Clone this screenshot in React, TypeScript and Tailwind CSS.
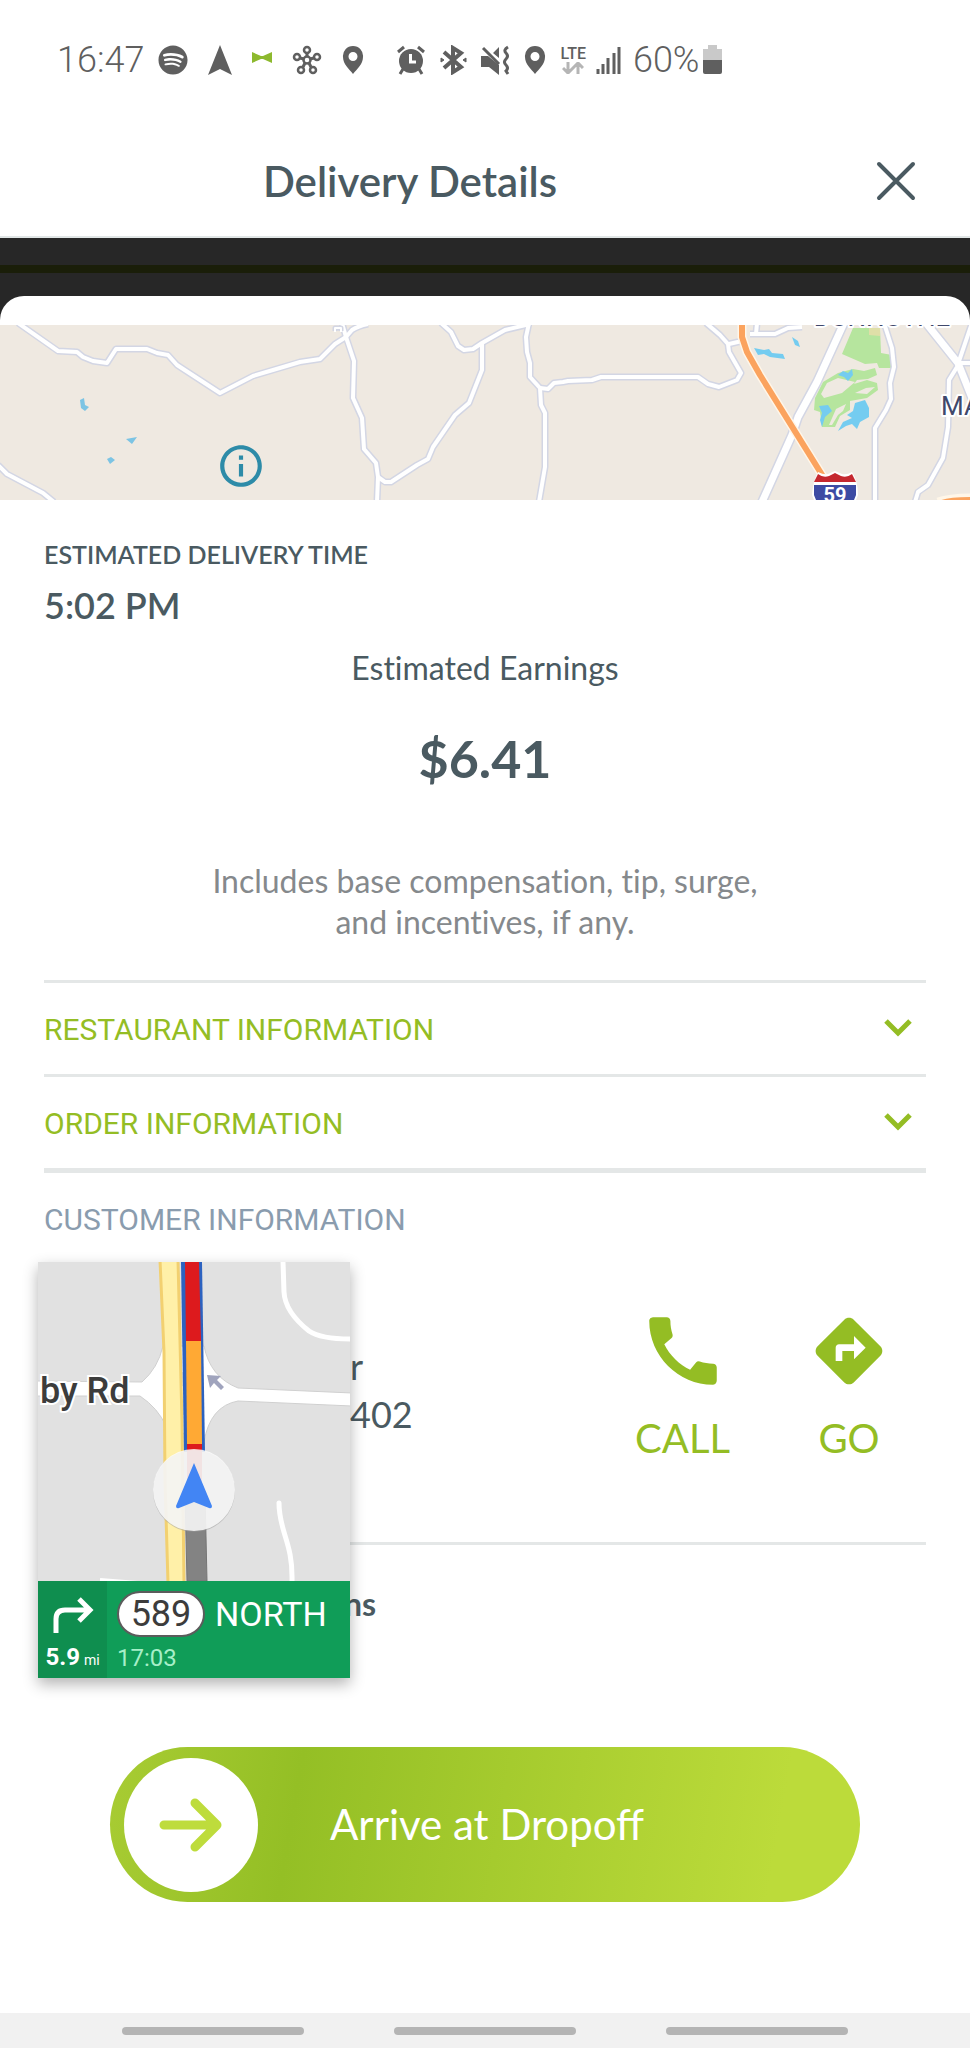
import React from 'react';
import { FaSpotify } from 'react-icons/fa';
import { MdCall, MdDirections, MdInfoOutline } from 'react-icons/md';

interface AccordionRowProps {
  title: string;
}

const ROADS = [
  'M18 -2 L58 26 L77 27 L83 32 L93 36 L107 38 L116 24 L147 24 L157 28 L168 30 L177 40 L220 68 L253 51 L300 37 L320 34 L335 19 L346 12 L352 5 Q358 1 368 -1',
  'M342 -2 L346 12 L354 36 L353 73 L362 93 L364 124 L376 138 L378 152 L377 177',
  'M378 152 L385 157 L391 157 L417 140 L428 134 L433 122 L455 90 L469 78 L482 45 L482 19',
  'M441 -2 L451 7 L458 21 L464 25 L473 24 L482 18 L505 5 L530 -1',
  'M-2 140 L7 149 L43 168 L54 177',
  'M529 -2 L526 12 L527 27 L530 38 L530 52 L540 63 L541 80 L545 88 L545 142 L539 177',
  'M540 63 L548 64 L554 58 L563 57 L568 56 L592 55 L601 52 L698 52 L708 59 L719 62 L737 55 L741 48 L729 27 L728 19 L720 10 L706 -2',
  'M729 19 L742 16',
  'M750 9 L775 9 L788 3 L802 2',
  'M756 9 L757 -2',
  'M884 -2 L892 23 L894 42 L890 58 L891 74 L886 85 L875 103 L875 177',
  'M972 -2 L957 42 L949 55 L948 102 L943 133 L928 160 L918 167 L915 177',
  'M958 38 L972 38',
];

const MAIN_ROADS = ['M844 -2 L817 57 L798 92 L792 110 L762 177', 'M926 -2 L958 38 L974 78'];

function AreaMap() {
  return (
    <svg
      viewBox="0 0 970 175"
      preserveAspectRatio="xMidYMid slice"
      className="block h-[175px] w-full bg-[#efe9e1]"
      fill="none"
      strokeLinejoin="round"
    >
      <path fill="#b6e59e" d="M853 3 L842 29 L865 39 L877 38 L879 43 L892 43 L892 30 L881 28 L880 3Z" />
      <path fill="#dfdfa8" d="M869 3 L880 3 L880 11 L869 10Z" />
      <path
        fill="#b6e59e"
        fillRule="evenodd"
        d="M815 73 L823 57 L838 48 L853 44 L864 46 L875 43 L877 50 L868 54 L857 55 L854 59 L867 55 L877 58 L878 65 L867 73 L850 76 L850 85 L840 91 L835 102 L822 102 L820 87 L814 85Z M821 69 L827 58 L838 53 L855 57 L842 68 L824 73Z M836 84 L846 79 L843 86 L838 90 L832 100 L829 100Z M855 68 L866 63 L875 62 L867 69Z"
      />
      <path
        fill="#74ccf0"
        d="M838 50 L843 46 L848 48 L852 44 L853 50 L848 56 L844 52Z M819 81 L828 80 L832 86 L825 92 L822 102 L820 95 L822 88Z M855 78 L865 75 L869 83 L869 92 L860 97 L857 104 L852 99 L846 101 L838 106 L843 97 L852 93 L847 90 L853 86Z M754 23 L764 25 L769 24 L772 28 L783 29 L785 34 L770 32 L764 29 L758 30Z M792 12 L798 16 L800 22 L795 20Z"
      />
      <path
        fill="#7cc4e4"
        d="M80 75 L84 73 L85 80 L89 82 L85 86 L81 83Z M126 114 L137 112 L132 119Z M107 134 L111 132 L115 135 L110 139Z"
      />
      <g stroke="#d3d6e4" strokeWidth="7">
        {ROADS.map((d) => (
          <path key={d} d={d} />
        ))}
      </g>
      <g stroke="#d3d6e4" strokeWidth="10">
        {MAIN_ROADS.map((d) => (
          <path key={d} d={d} />
        ))}
      </g>
      <g stroke="#ffffff" strokeWidth="4">
        {ROADS.map((d) => (
          <path key={d} d={d} />
        ))}
      </g>
      <g stroke="#ffffff" strokeWidth="7">
        {MAIN_ROADS.map((d) => (
          <path key={d} d={d} />
        ))}
      </g>
      <path stroke="#d3d6e4" strokeWidth="5" d="M335 6 V3 H341 V6" />
      <path stroke="#ffffff" strokeWidth="2" d="M335 7 V3 H341 V7" />
      <path stroke="#fff6e8" strokeWidth="9" d="M742 -2 L742 12 L747 27 L760 50 L824 153 M938 177 Q950 173 972 173" />
      <path stroke="#fba35e" strokeWidth="6" d="M742 -2 L742 12 L747 27 L760 50 L824 153 M942 178 Q950 175 972 175" />
      <path
        fill="#ffffff"
        d="M818 147 Q824 150 828 149 L835 146 L842 149 Q847 150 852 147 Q858 156 858 170 L856 175 L814 175 L812 170 Q813 156 818 147Z"
      />
      <path fill="#c5282f" d="M818 149 Q823 153 829 151 L835 148 L841 151 Q847 153 852 149 L856 157 L814 157Z" />
      <path fill="#3d4ba3" d="M814 160 L856 160 L856 170 L854 175 L816 175 L814 170Z" />
      <text x="835" y="177" textAnchor="middle" fill="#ffffff" className="font-['Roboto'] text-[20px] font-bold">
        59
      </text>
      <g
        fill="#40486b"
        stroke="#ffffff"
        strokeWidth="4"
        paintOrder="stroke"
        className="font-['Roboto'] text-[26px]"
      >
        <text x="882" y="1" textAnchor="middle">
          DUNNUTHE
        </text>
        <text x="941" y="90">
          MA
        </text>
      </g>
    </svg>
  );
}

function Pin() {
  return (
    <svg width="22" height="30" viewBox="0 0 22 30" fill="currentColor" fillRule="evenodd">
      <path d="M11 1 A10 10 0 0 1 21 12 C21 19 15 24 11 29 C7 24 1 19 1 12 A10 10 0 0 1 11 1Z M11 7 A4 4 0 1 0 11 16 A4 4 0 1 0 11 7Z" />
    </svg>
  );
}

function StatusBar() {
  return (
    <div className="flex h-[120px] items-center pl-[57px] font-['Roboto'] text-[36px] leading-none font-light text-[#5f5f5f]">
      <span>16:47</span>
      <div className="ml-3.5 flex items-center gap-5">
        <FaSpotify size={30} />
        <svg width="24" height="30" viewBox="0 0 24 30" fill="currentColor">
          <path d="M12 0 L24 30 L12 24 L0 30Z" />
        </svg>
        <svg width="20" height="30" viewBox="0 0 20 30" fill="#8db92e">
          <path d="M0 7 L9 11 H11 L20 7 V18 L11 14 H9 L0 18Z" />
        </svg>
        <svg width="30" height="30" viewBox="0 0 30 30" fill="none" stroke="currentColor" strokeWidth="2.5">
          <circle cx="15" cy="15" r="3.5" />
          <circle cx="15" cy="5" r="3" />
          <circle cx="5" cy="12" r="3" />
          <circle cx="25" cy="12" r="3" />
          <circle cx="9" cy="25" r="3" />
          <circle cx="21" cy="25" r="3" />
          <path strokeWidth="3" d="M15 8 V12 M8 13 L12 14 M22 13 L18 14 M11 22 L13 18 M19 22 L17 18" />
        </svg>
        <Pin />
      </div>
      <div className="ml-8 flex items-center gap-[14px]">
        <svg width="30" height="30" viewBox="0 0 30 30" fill="currentColor">
          <circle cx="15" cy="16" r="12" />
          <path d="M2 7 L8 2 M28 7 L22 2 M7 24 L4 29 M23 24 L26 29" stroke="currentColor" strokeWidth="3" />
          <path d="M14.5 9 V17 H20" fill="none" stroke="#ffffff" strokeWidth="3" />
        </svg>
        <svg width="27" height="30" viewBox="0 0 27 30" fill="none" stroke="currentColor" strokeWidth="4">
          <path d="M4 7 L21 22 L13 27 V3 L21 8 L4 23" />
          <path d="M1 13 L4 15 L1 17Z M26 13 L23 15 L26 17Z" fill="currentColor" strokeWidth="1" />
        </svg>
        <svg width="29" height="30" viewBox="0 0 29 30" fill="currentColor">
          <path d="M0 11 H7 L18 20 V30 L8 22 H0Z M18 2 V13 L12 8Z" />
          <path d="M2 3 L18 19" stroke="currentColor" strokeWidth="3" />
          <path
            d="M27 2 Q22 5 25 8 T25 14 T25 20 T25 26 L27 29"
            fill="none"
            stroke="currentColor"
            strokeWidth="3"
          />
        </svg>
        <Pin />
        <div className="flex flex-col items-center">
          <span className="text-[16px] leading-4 font-medium">LTE</span>
          <svg width="22" height="12" viewBox="0 0 22 12" fill="none" stroke="#b5b5b5" strokeWidth="3">
            <path d="M6 0 V10 M1 6 L6 11 L11 6 M16 12 V2 M11 6 L16 1 L21 6" />
          </svg>
        </div>
      </div>
      <svg width="25" height="30" viewBox="0 0 25 30" className="ml-2.5" stroke="currentColor" strokeWidth="3">
        <path d="M2 24 V29 M7 19 V29 M12 13 V29 M18 8 V29 M23 2 V29" />
      </svg>
      <span className="ml-3">60%</span>
      <svg width="19" height="30" viewBox="0 0 19 30" className="ml-1">
        <path d="M5 0 H14 V4 H19 V15 H0 V4 H5Z" fill="#c9c9c9" />
        <path d="M0 15 H19 V27 Q19 29 17 29 H2 Q0 29 0 27Z" fill="currentColor" />
      </svg>
    </div>
  );
}

function AccordionRow({ title }: AccordionRowProps) {
  return (
    <button className="flex h-[91px] w-full items-center justify-between pt-0.5 pr-3 font-['Roboto'] text-[30px] text-[#94bd24]">
      {title}
      <svg width="32" height="22" viewBox="0 0 32 22" fill="none" stroke="currentColor" strokeWidth="5">
        <path d="M4 2 L16 14 L28 2" />
      </svg>
    </button>
  );
}

// Floating turn-by-turn window that sits over the customer section
function NavigationWindow() {
  return (
    <div className="absolute top-0 -left-[6px] w-[312px] bg-[#e1e1e1] shadow-[0_6px_14px_rgba(0,0,0,0.3)]">
      <svg viewBox="0 0 312 319" className="block h-[319px] w-full" fill="none">
        <path stroke="#ffffff" strokeWidth="5" d="M245 0 L246 30 Q247 50 271 69 Q283 77 312 77" />
        <path stroke="#ffffff" strokeWidth="5" strokeLinecap="round" d="M241 241 C241 270 255 280 254 319" />
        <path stroke="#ffffff" strokeWidth="4" d="M62 318 L100 321" />
        <path
          fill="#ffffff"
          stroke="#d0d0d0"
          d="M104 120 Q120 106 125 84 L166 84 Q172 115 200 126 L314 131 V144 L200 139 Q172 144 166 180 L128 164 Q120 146 102 134 L-2 134 V119Z"
        />
        <path fill="#e1e1e1" d="M141 110 h6 v14 h-8z M140 137 h7 v16 h-6z" />
        <path fill="#fff0a8" stroke="#f2d070" strokeWidth="3" d="M122 -2 L126 90 L127 220 L130 321 H146 L144 160 L140 -2Z" />
        <path fill="#2c62c0" d="M143 0 H164 L167 190 H146Z" />
        <path fill="#dd1a1d" d="M147 0 H161 L163 79 H148Z" />
        <path fill="#ffa934" d="M148 79 H163 L164 182 H149Z" />
        <path fill="#dd1a1d" d="M149 182 H164 V226 H149Z" />
        <path fill="#838383" stroke="#757575" d="M147 230 H167 L169 319 H149Z" />
        <path fill="#a0a4bd" d="M169 113 L183 114 L179 118 L186 125 L183 128 L176 121 L172 126Z" />
        <circle cx="156" cy="229" r="41" fill="#9a9a9a" fillOpacity="0.5" />
        <circle cx="156" cy="228" r="41" fill="#fbfbfb" fillOpacity="0.85" />
        <path fill="#4285f4" d="M156 201 L174 244 Q174 247 171 246 L156 240 L141 246 Q138 247 138 244Z" />
        <text
          x="2"
          y="141"
          fill="#3c3c3c"
          stroke="#ffffff"
          strokeWidth="4"
          paintOrder="stroke"
          className="font-['Roboto'] text-[36px] font-medium"
        >
          by Rd
        </text>
      </svg>
      <div className="flex h-[97px] bg-[#109d58] text-white">
        <div className="flex w-[69px] flex-col items-center justify-between bg-[#0f8e4f] pt-4">
          <svg width="42" height="38" viewBox="0 0 42 38" fill="none" stroke="currentColor" strokeWidth="5">
            <path d="M4 36 V22 Q4 13 13 13 H37 M27 2 L38 13 L27 24" />
          </svg>
          <div className="flex items-baseline gap-1 font-['Roboto'] text-[24px] leading-9 font-bold">
            5.9 <span className="text-[14px] font-normal">mi</span>
          </div>
        </div>
        <div className="flex flex-col justify-between pt-2.5 pb-1 pl-2.5 font-['Roboto']">
          <div className="flex items-center gap-2.5">
            <span className="flex h-[46px] w-[88px] items-center justify-center rounded-full border-2 border-[#5c5c5c] bg-white text-[36px] leading-none text-[#3c3c3c]">
              589
            </span>
            <span className="text-[34px] leading-none">NORTH</span>
          </div>
          <span className="text-[24px] leading-8 text-[#a6efc8]">17:03</span>
        </div>
      </div>
    </div>
  );
}

export default function App() {
  return (
    <div className="flex min-h-screen flex-col bg-white font-['Lato',sans-serif] text-[#4a5a61] [font-variant-ligatures:none]">
      <StatusBar />
      <header className="flex h-[118px] items-center border-b-2 border-[#e1e6e6] pt-1.5 pr-[50px]">
        <h1 className="flex-1 pr-[52px] text-center text-[42px] font-semibold">Delivery Details</h1>
        <button aria-label="Close" className="p-1">
          <svg width="40" height="40" viewBox="0 0 40 40" fill="none" stroke="currentColor" strokeWidth="4" strokeLinecap="round">
            <path d="M3 3 L37 37 M37 3 L3 37" />
          </svg>
        </button>
      </header>
      <div className="bg-[#272727] pt-[27px]">
        <div className="h-2 bg-[#1a1e09]" />
        <div className="mt-[23px] h-[29px] rounded-t-3xl bg-white" />
      </div>
      <div className="relative">
        <AreaMap />
        <button aria-label="Map information" className="absolute top-[116px] left-[216px] text-[#2d8ba8]">
          <MdInfoOutline size={50} />
        </button>
      </div>
      <main className="px-11">
        <h2 className="pt-[34px] text-[25px] leading-10 font-semibold">ESTIMATED DELIVERY TIME</h2>
        <p className="mt-2 text-[36px] leading-[46px] font-semibold">5:02 PM</p>
        <p className="mt-5 text-center text-[32px] leading-10">Estimated Earnings</p>
        <p className="mt-10 text-center text-[52px] leading-[60px] font-bold">$6.41</p>
        <p className="mt-[72px] text-center text-[32px] leading-[41px] text-[#85898c]">
          Includes base compensation, tip, surge,
          <br />
          and incentives, if any.
        </p>
        <div className="mt-[38px] border-y-[3px] border-[#e4e7e7]">
          <AccordionRow title="RESTAURANT INFORMATION" />
        </div>
        <div className="border-b-[5px] border-[#e4e7e7]">
          <AccordionRow title="ORDER INFORMATION" />
        </div>
        <h2 className="flex h-[89px] items-center pt-1 font-['Roboto'] text-[30px] text-[#8a9cae]">CUSTOMER INFORMATION</h2>
        <section className="relative">
          <NavigationWindow />
          <div className="flex h-[283px] border-b-[3px] border-[#e4e7e7] pt-11 pr-8 pl-[306px] text-[36px]">
            <div className="flex-1 pt-9 leading-[48px]">
              <p>r</p>
              <p>402</p>
            </div>
            <div className="flex gap-[74px] text-[40px] text-[#94bd24]">
              <button className="flex flex-col items-center gap-3 self-start">
                <MdCall size={90} />
                CALL
              </button>
              <button className="flex flex-col items-center gap-3 self-start">
                <span className="flex size-[90px] items-center justify-center">
                  <MdDirections size={80} />
                </span>
                GO
              </button>
            </div>
          </div>
          <p className="pt-[34px] pb-[98px] pl-[300px] text-[32px] leading-[50px] font-bold">ns</p>
        </section>
      </main>
      <div className="px-[110px] pt-5">
        <button className="flex h-[155px] w-full items-center rounded-full bg-[linear-gradient(100deg,#a8cc33_0%,#94bf25_25%,#bcdb3a_88%)] pl-[14px] text-[42px] text-white [font-variant-ligatures:normal]">
          <span className="flex size-[134px] items-center justify-center rounded-full bg-white text-[#bedc3c]">
            <svg width="64" height="56" viewBox="0 0 64 56" fill="none" stroke="currentColor" strokeWidth="9" strokeLinecap="round" strokeLinejoin="round">
              <path d="M5 28 H58 M36 6 L58 28 L36 50" />
            </svg>
          </span>
          <span className="pl-[72px]">Arrive at Dropoff</span>
        </button>
      </div>
      <nav className="mt-auto flex h-[35px] items-center justify-center gap-[90px] bg-[#f1f1f1]">
        <button aria-label="Recent apps" className="h-2 w-[182px] rounded-full bg-[#b4b4b4]" />
        <button aria-label="Home" className="h-2 w-[182px] rounded-full bg-[#b4b4b4]" />
        <button aria-label="Back" className="h-2 w-[182px] rounded-full bg-[#b4b4b4]" />
      </nav>
    </div>
  );
}
